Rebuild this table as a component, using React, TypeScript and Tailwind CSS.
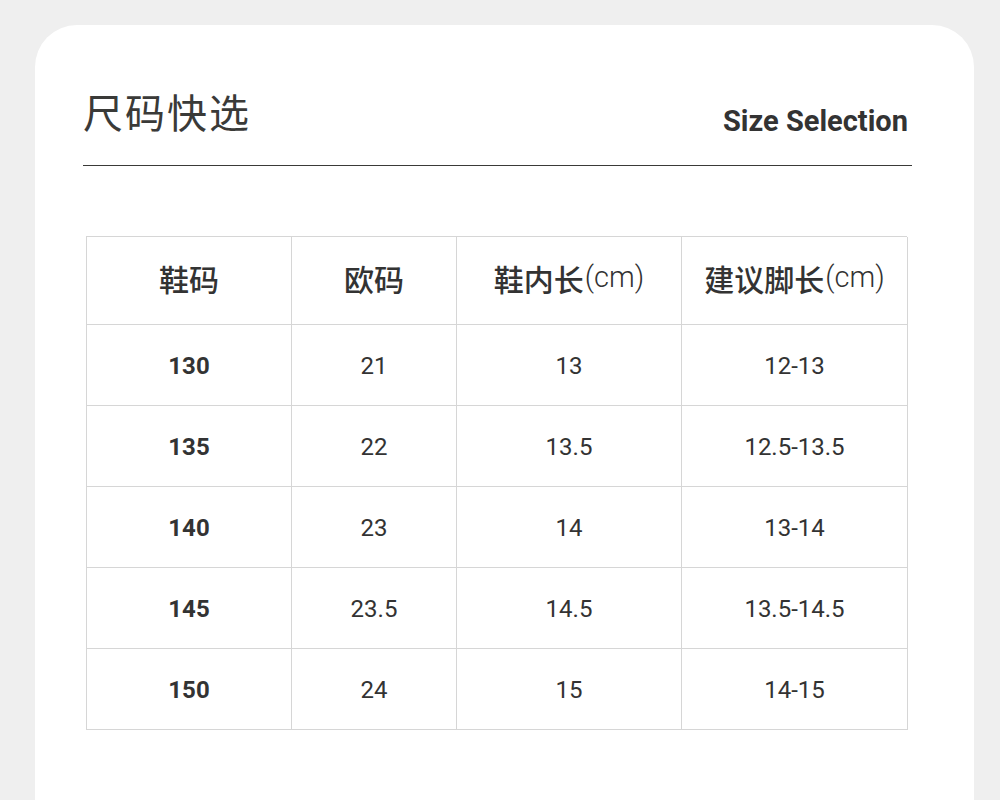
import React from "react"

const cjk = "font-['Noto_Sans_CJK_SC','Noto_Sans',sans-serif]"
const latin = "font-['Roboto','Noto_Sans_CJK_SC',sans-serif]"

const rows = [
  ["130", "21", "13", "12-13"],
  ["135", "22", "13.5", "12.5-13.5"],
  ["140", "23", "14", "13-14"],
  ["145", "23.5", "14.5", "13.5-14.5"],
  ["150", "24", "15", "14-15"],
]

function HeadCell({ zh, unit }: { zh: string; unit?: boolean }) {
  return (
    <div className="flex h-[88px] items-center justify-center border-r border-b border-[#d6d6d6] pb-[6px]">
      <span className={`${cjk} text-[30px] font-medium leading-none text-[#333]`}>{zh}</span>
      {unit && (
        <span className={`${latin} ml-[1px] text-[29px] font-light leading-none text-[#333]`}>(cm)</span>
      )}
    </div>
  )
}

export default function App() {
  return (
    <div className="h-[800px] overflow-hidden bg-[#efefef] pt-[25px]">
      <div className="ml-[35px] h-[800px] w-[939px] rounded-t-[42px] bg-white pl-[48px] pr-[62px] pt-[62px]">
        {/* heading */}
        <div className="flex items-end justify-between border-b border-[#3a3a38] pb-[30px]">
          <h1 className={`${cjk} text-[40px] font-normal leading-[48px] tracking-[2px] text-[#3a3a38]`}>
            尺码快选
          </h1>
          <div className={`${latin} -mb-[1px] mr-[4px] text-[29px] font-bold leading-none text-[#333]`}>
            Size Selection
          </div>
        </div>

        {/* size table */}
        <div className="ml-[3px] mt-[70px] grid w-[821px] grid-cols-[205px_165px_225px_226px] border-t border-l border-[#d6d6d6]">
          <HeadCell zh="鞋码" />
          <HeadCell zh="欧码" />
          <HeadCell zh="鞋内长" unit />
          <HeadCell zh="建议脚长" unit />
          {rows.map((r) =>
            r.map((v, i) => (
              <div
                key={r[0] + i}
                className={`${latin} flex h-[81px] items-center justify-center border-r border-b border-[#d6d6d6] pt-[2px] text-[24px] leading-none text-[#333] ${i === 0 ? "font-bold" : "font-normal"}`}
              >
                {v}
              </div>
            ))
          )}
        </div>
      </div>
    </div>
  )
}
